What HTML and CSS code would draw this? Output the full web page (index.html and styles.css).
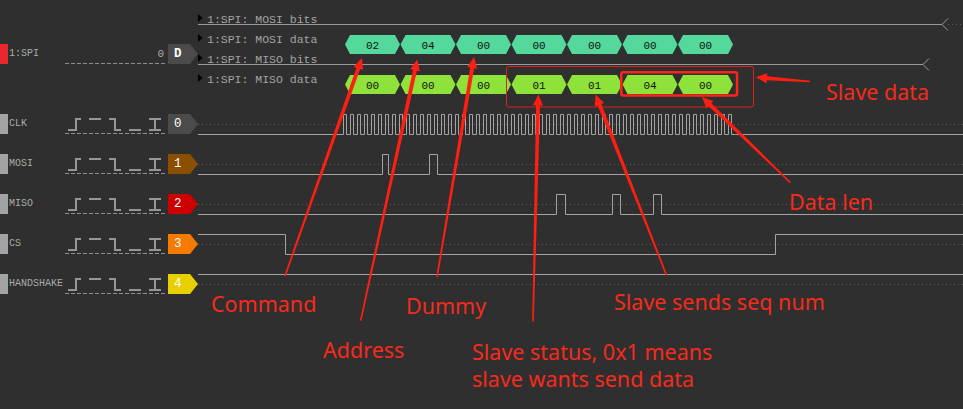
FILE: index.html
```html
<!DOCTYPE html>
<html>
<head>
<meta charset="utf-8">
<title>SPI capture</title>
<link rel="stylesheet" href="styles.css">
</head>
<body>
<div class="scope">
  <div class="traces">
    <div class="row row-spi">
      <div class="side">
        <span class="strip strip-spi"></span>
        <span class="name">1:SPI</span>
        <span class="ctl"><span class="value">0</span></span>
        <span class="tag tag-d">D</span>
      </div>
      <svg class="wave" width="765" height="104" viewBox="0 0 765 104">
        <defs>
          <polygon id="hex" points="0,9.5 5,0 50,0 55,9.5 50,19 5,19"/>
        </defs>
        <g class="marks">
          <polygon points="0,14 4.5,18 0,22"/>
          <polygon points="0,34 4.5,38 0,42"/>
          <polygon points="0,54 4.5,58 0,62"/>
          <polygon points="0,74 4.5,78 0,82"/>
        </g>
        <path class="bits" d="M0 24.5H744M750 18.5L744 24.5L750 30.5M0 64.5H725M731 58.5L725 64.5L731 70.5"/>
        <path class="dots" d="M750 24.5H765"/>
        <g class="dec">
          <text x="9" y="23">1:SPI: MOSI bits</text>
          <text x="9" y="43">1:SPI: MOSI data</text>
          <text x="9" y="63">1:SPI: MISO bits</text>
          <text x="9" y="83">1:SPI: MISO data</text>
        </g>
        <g class="hex-mosi">
          <use href="#hex" x="147" y="35"/>
          <use href="#hex" x="202.5" y="35"/>
          <use href="#hex" x="258" y="35"/>
          <use href="#hex" x="313.5" y="35"/>
          <use href="#hex" x="369" y="35"/>
          <use href="#hex" x="424.5" y="35"/>
          <use href="#hex" x="480" y="35"/>
        </g>
        <g class="hex-miso">
          <use href="#hex" x="147" y="75"/>
          <use href="#hex" x="202.5" y="75"/>
          <use href="#hex" x="258" y="75"/>
          <use href="#hex" x="313.5" y="75"/>
          <use href="#hex" x="369" y="75"/>
          <use href="#hex" x="424.5" y="75"/>
          <use href="#hex" x="480" y="75"/>
        </g>
        <g class="hex-text">
          <text x="174.5" y="48.5">02</text>
          <text x="230" y="48.5">04</text>
          <text x="285.5" y="48.5">00</text>
          <text x="341" y="48.5">00</text>
          <text x="396.5" y="48.5">00</text>
          <text x="452" y="48.5">00</text>
          <text x="507.5" y="48.5">00</text>
          <text x="174.5" y="88.5">00</text>
          <text x="230" y="88.5">00</text>
          <text x="285.5" y="88.5">00</text>
          <text x="341" y="88.5">01</text>
          <text x="396.5" y="88.5">01</text>
          <text x="452" y="88.5">04</text>
          <text x="507.5" y="88.5">00</text>
        </g>
      </svg>
    </div>

    <div class="row">
      <div class="side">
        <span class="strip"></span>
        <span class="name">CLK</span>
        <span class="ctl"><svg class="edges" width="100" height="20"><path d="M3 16H11V5H16M24 5H36M44 5H50V16H56M64 16H76M84 5H96M84 16H96M90 5V16"/></svg></span>
        <span class="tag tag-0">0</span>
      </div>
      <svg class="wave" width="765" height="40" viewBox="0 0 765 40">
        <defs>
          <path id="clkbyte" d="M0 30.5V10.5h3V30.5h4V10.5h3V30.5h4V10.5h3V30.5h4V10.5h3V30.5h4V10.5h3V30.5h4V10.5h3V30.5h4V10.5h3V30.5h4V10.5h3V30.5h4"/>
        </defs>
        <path class="dots" d="M0 20.5H765"/>
        <path class="sig" d="M0 30.5H145.5M537.5 30.5H765"/>
        <g class="sig">
          <use href="#clkbyte" x="145.5"/>
          <use href="#clkbyte" x="201.5"/>
          <use href="#clkbyte" x="257.5"/>
          <use href="#clkbyte" x="313.5"/>
          <use href="#clkbyte" x="369.5"/>
          <use href="#clkbyte" x="425.5"/>
          <use href="#clkbyte" x="481.5"/>
        </g>
      </svg>
    </div>

    <div class="row">
      <div class="side">
        <span class="strip"></span>
        <span class="name">MOSI</span>
        <span class="ctl"><svg class="edges" width="100" height="20"><path d="M3 16H11V5H16M24 5H36M44 5H50V16H56M64 16H76M84 5H96M84 16H96M90 5V16"/></svg></span>
        <span class="tag tag-1">1</span>
      </div>
      <svg class="wave" width="765" height="40" viewBox="0 0 765 40">
        <path class="dots" d="M0 20.5H765"/>
        <path class="sig" d="M0 30.5H184.5V10.5H190.5V30.5H231.5V10.5H239.5V30.5H765"/>
      </svg>
    </div>

    <div class="row">
      <div class="side">
        <span class="strip"></span>
        <span class="name">MISO</span>
        <span class="ctl"><svg class="edges" width="100" height="20"><path d="M3 16H11V5H16M24 5H36M44 5H50V16H56M64 16H76M84 5H96M84 16H96M90 5V16"/></svg></span>
        <span class="tag tag-2">2</span>
      </div>
      <svg class="wave" width="765" height="40" viewBox="0 0 765 40">
        <path class="dots" d="M0 20.5H765"/>
        <path class="sig" d="M0 30.5H358.5V10.5H367.5V30.5H414.5V10.5H422.5V30.5H455.5V10.5H463.5V30.5H765"/>
      </svg>
    </div>

    <div class="row">
      <div class="side">
        <span class="strip"></span>
        <span class="name">CS</span>
        <span class="ctl"><svg class="edges" width="100" height="20"><path d="M3 16H11V5H16M24 5H36M44 5H50V16H56M64 16H76M84 5H96M84 16H96M90 5V16"/></svg></span>
        <span class="tag tag-3">3</span>
      </div>
      <svg class="wave" width="765" height="40" viewBox="0 0 765 40">
        <path class="dots" d="M0 20.5H765"/>
        <path class="sig" d="M0 10.5H87.5V30.5H577.5V10.5H765"/>
      </svg>
    </div>

    <div class="row">
      <div class="side">
        <span class="strip"></span>
        <span class="name">HANDSHAKE</span>
        <span class="ctl"><svg class="edges" width="100" height="20"><path d="M3 16H11V5H16M24 5H36M44 5H50V16H56M64 16H76M84 5H96M84 16H96M90 5V16"/></svg></span>
        <span class="tag tag-4">4</span>
      </div>
      <svg class="wave" width="765" height="40" viewBox="0 0 765 40">
        <path class="dots" d="M0 20.5H765"/>
        <path class="sig" d="M0 10.5H765"/>
      </svg>
    </div>
  </div>

  <svg class="annot" width="963" height="409" viewBox="0 0 963 409">
    <rect class="box-thin" x="506.5" y="66.5" width="247" height="40.5" rx="2"/>
    <rect class="box-thick" x="621.25" y="72.25" width="115.8" height="23.2" rx="2"/>
    <g class="arrow">
      <polygon transform="translate(285 276) rotate(-70.55)" points="0,-0.8 220.2,-2 220.2,-5 231.2,0 220.2,5 220.2,2 0,0.8"/>
      <polygon transform="translate(360.7 320.7) rotate(-77.77)" points="0,-0.8 256.3,-2 256.3,-5 267.3,0 256.3,5 256.3,2 0,0.8"/>
      <polygon transform="translate(437 277) rotate(-80.45)" points="0,-0.8 212.1,-2 212.1,-5 223.1,0 212.1,5 212.1,2 0,0.8"/>
      <polygon transform="translate(533 321.5) rotate(-88.66)" points="0,-0.8 216.1,-2 216.1,-5 227.1,0 216.1,5 216.1,2 0,0.8"/>
      <polygon transform="translate(666.5 275.3) rotate(-111.44)" points="0,-0.8 183.2,-2 183.2,-5 194.2,0 183.2,5 183.2,2 0,0.8"/>
      <polygon transform="translate(790.5 182.7) rotate(-135.92)" points="0,-0.8 112.2,-2 112.2,-5 123.2,0 112.2,5 112.2,2 0,0.8"/>
      <polygon transform="translate(810 81.5) rotate(-175.55)" points="0,-0.8 43.2,-2 43.2,-5 54.2,0 43.2,5 43.2,2 0,0.8"/>
    </g>
  </svg>

  <div class="note note-slave-data">Slave data</div>
  <div class="note note-data-len">Data len</div>
  <div class="note note-command">Command</div>
  <div class="note note-dummy">Dummy</div>
  <div class="note note-seq">Slave sends seq num</div>
  <div class="note note-address">Address</div>
  <div class="note note-status">Slave status, 0x1 means<br>slave wants send data</div>
</div>
</body>
</html>
```

FILE: styles.css
```css
* { box-sizing: border-box; }
html, body { margin: 0; padding: 0; background: #2f2f2f; }
body { width: 963px; height: 409px; overflow: hidden; }

.scope {
  position: relative;
  width: 963px;
  height: 409px;
  background: #2f2f2f;
  font-family: "Liberation Mono", "DejaVu Sans Mono", monospace;
  color: #a8a8a8;
}

.traces { display: flex; flex-direction: column; }

.row { display: flex; align-items: flex-start; height: 40px; }
.row-spi { height: 104px; }

.side {
  display: flex;
  flex: none;
  width: 198px;
  height: 20px;
  margin-top: 10px;
}
.row-spi .side { margin-top: 44px; }

.strip { flex: none; width: 8px; background: #a3a3a3; }
.strip-spi { background: #e8282c; }

.name {
  flex: none;
  width: 57px;
  padding-left: 1px;
  font-size: 10px;
  line-height: 20px;
  white-space: nowrap;
  color: #ababab;
}

.ctl {
  flex: none;
  width: 100px;
  display: flex;
  align-items: center;
  justify-content: flex-end;
  background: repeating-linear-gradient(to right, #8e8e8e 0 4px, transparent 4px 6px) left bottom / 100% 1px no-repeat;
}
.value { font-size: 11px; line-height: 1; padding-right: 1px; color: #ababab; }

.edges { display: block; }
.edges path { fill: none; stroke: #969696; stroke-width: 2; }

.tag {
  flex: none;
  width: 30px;
  height: 20px;
  margin-left: 3px;
  padding-left: 6px;
  color: #fff;
  font-size: 12.5px;
  line-height: 20px;
  clip-path: polygon(0 0, 22px 0, 30px 50%, 22px 100%, 0 100%);
}
.tag-d { background: #4b4b4b; font-weight: bold; }
.tag-0 { background: #4b4b4b; }
.tag-1 { background: #8a4f00; }
.tag-2 { background: #cc0000; }
.tag-3 { background: #f47b00; }
.tag-4 { background: #e8d000; }

.wave { display: block; flex: none; }
.sig { fill: none; stroke: #a3a3a3; stroke-width: 1; }
.dots { fill: none; stroke: #5e5e5e; stroke-width: 1; stroke-dasharray: 1 3; }
.bits { fill: none; stroke: #9a9a9a; stroke-width: 1; }
.marks { fill: #000; }
.dec text { font-family: "Liberation Mono", monospace; font-size: 11.5px; fill: #a4a4a4; }
.hex-mosi { fill: #55d89b; }
.hex-miso { fill: #8ee23a; }
.hex-text text {
  font-family: "Liberation Mono", monospace;
  font-size: 11px;
  fill: #111;
  text-anchor: middle;
}

.annot { position: absolute; left: 0; top: 0; pointer-events: none; }
.box-thin { fill: none; stroke: #d8231c; stroke-width: 1; }
.box-thick { fill: none; stroke: #ff2419; stroke-width: 2.5; }
.arrow { fill: #ff1f12; }

.note {
  position: absolute;
  font-family: "Noto Sans", "Open Sans", sans-serif;
  font-size: 21.5px;
  line-height: 27px;
  color: #f72a1b;
  white-space: nowrap;
}
.note-slave-data { left: 826px; top: 78px; }
.note-data-len { left: 789px; top: 188px; }
.note-command { left: 211px; top: 290px; }
.note-dummy { left: 406px; top: 292px; }
.note-seq { left: 614px; top: 288px; }
.note-address { left: 323px; top: 336px; }
.note-status { left: 472px; top: 338px; }
```
